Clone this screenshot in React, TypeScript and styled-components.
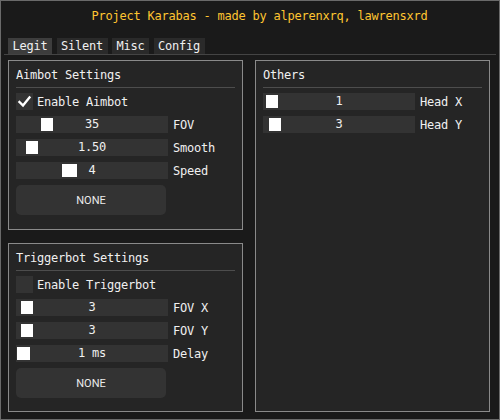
import React from "react";
import styled, { createGlobalStyle } from "styled-components";

const Global = createGlobalStyle`
  html, body { margin: 0; padding: 0; background: #1a1a1a; }
  * { box-sizing: border-box; }
`;

const Window = styled.div`
  width: 500px;
  height: 420px;
  background: #1a1a1a;
  border: 1px solid #6a6a6a;
  font-family: "DejaVu Sans Mono", monospace;
  font-size: 12px;
  letter-spacing: -0.22px;
  color: #f0f0f0;
  display: flex;
  flex-direction: column;
`;

const Title = styled.div`
  height: 30px;
  line-height: 30px;
  padding-left: 19px;
  text-align: center;
  color: #ffc531;
`;

const TabBar = styled.div`
  margin: 7px 3px 0;
  padding-left: 4px;
  display: flex;
  gap: 4.5px;
  border-bottom: 1px solid #444444;
`;

const Tab = styled.div<{ $active?: boolean }>`
  height: 16px;
  line-height: 16px;
  padding: 0 4.5px;
  background: ${(p) => (p.$active ? "#3d3d3d" : "#2a2a2a")};
`;

const Content = styled.div`
  padding: 5px 0 0 7px;
  display: grid;
  grid-template-columns: 235px 235px;
  column-gap: 12px;
`;

const Column = styled.div`
  display: flex;
  flex-direction: column;
  gap: 13px;
`;

const Panel = styled.div<{ $h: number }>`
  height: ${(p) => p.$h}px;
  background: #252525;
  border: 1px solid #8a8a8a;
  padding: 7px 7px 0;
  display: flex;
  flex-direction: column;
`;

const Heading = styled.div`
  height: 13px;
  line-height: 14px;
`;

const Separator = styled.div`
  height: 1px;
  background: #4d4d4d;
  margin: 6px 0 5px;
`;

const Items = styled.div`
  display: flex;
  flex-direction: column;
  gap: 6px;
`;

const CheckRow = styled.div`
  display: flex;
  align-items: center;
  gap: 4px;
  height: 17px;
`;

const CheckBox = styled.div`
  width: 17px;
  height: 17px;
  background: #333333;
  display: flex;
  align-items: center;
  justify-content: center;
`;

const SliderRow = styled.div`
  display: flex;
  align-items: center;
  gap: 5px;
  height: 17px;
`;

const Frame = styled.div`
  position: relative;
  width: 152px;
  height: 17px;
  background: #333333;
  line-height: 17px;
  text-align: center;
`;

const Grab = styled.div`
  position: absolute;
  top: 2px;
  height: 13px;
  background: #ffffff;
`;

const Value = styled.span`
  position: relative;
`;

const Button = styled.div`
  width: 150px;
  height: 30px;
  border-radius: 5px;
  background: #333333;
  display: flex;
  align-items: center;
  justify-content: center;
  font-family: Roboto, "Liberation Sans", sans-serif;
  font-size: 11px;
  letter-spacing: 0;
  color: #ececec;
`;

const Check = () => (
  <svg width="17" height="17" viewBox="0 0 17 17">
    <polyline
      points="3.5,9 7,12.5 13.5,4.5"
      fill="none"
      stroke="#ffffff"
      strokeWidth="2.4"
      strokeLinecap="square"
    />
  </svg>
);

type S = { v: string; label: string; x: number; w: number };

const Slider = ({ v, label, x, w }: S) => (
  <SliderRow>
    <Frame>
      <Grab style={{ left: x, width: w }} />
      <Value>{v}</Value>
    </Frame>
    <span>{label}</span>
  </SliderRow>
);

const aim: S[] = [
  { v: "35", label: "FOV", x: 25, w: 12 },
  { v: "1.50", label: "Smooth", x: 10, w: 12 },
  { v: "4", label: "Speed", x: 46, w: 15 },
];

const trig: S[] = [
  { v: "3", label: "FOV X", x: 5, w: 12 },
  { v: "3", label: "FOV Y", x: 5, w: 12 },
  { v: "1 ms", label: "Delay", x: 1, w: 13 },
];

const others: S[] = [
  { v: "1", label: "Head X", x: 3, w: 12 },
  { v: "3", label: "Head Y", x: 6, w: 12 },
];

export default function App() {
  return (
    <>
      <Global />
      <Window>
        <Title>Project Karabas - made by alperenxrq, lawrensxrd</Title>
        <TabBar>
          <Tab $active>Legit</Tab>
          <Tab>Silent</Tab>
          <Tab>Misc</Tab>
          <Tab>Config</Tab>
        </TabBar>
        <Content>
          <Column>
            <Panel $h={170}>
              <Heading>Aimbot Settings</Heading>
              <Separator />
              <Items>
                <CheckRow>
                  <CheckBox>
                    <Check />
                  </CheckBox>
                  <span>Enable Aimbot</span>
                </CheckRow>
                {aim.map((s) => (
                  <Slider key={s.label} {...s} />
                ))}
                <Button>NONE</Button>
              </Items>
            </Panel>
            <Panel $h={169}>
              <Heading>Triggerbot Settings</Heading>
              <Separator />
              <Items>
                <CheckRow>
                  <CheckBox />
                  <span>Enable Triggerbot</span>
                </CheckRow>
                {trig.map((s) => (
                  <Slider key={s.label} {...s} />
                ))}
                <Button>NONE</Button>
              </Items>
            </Panel>
          </Column>
          <Column>
            <Panel $h={352}>
              <Heading>Others</Heading>
              <Separator />
              <Items>
                {others.map((s) => (
                  <Slider key={s.label} {...s} />
                ))}
              </Items>
            </Panel>
          </Column>
        </Content>
      </Window>
    </>
  );
}
